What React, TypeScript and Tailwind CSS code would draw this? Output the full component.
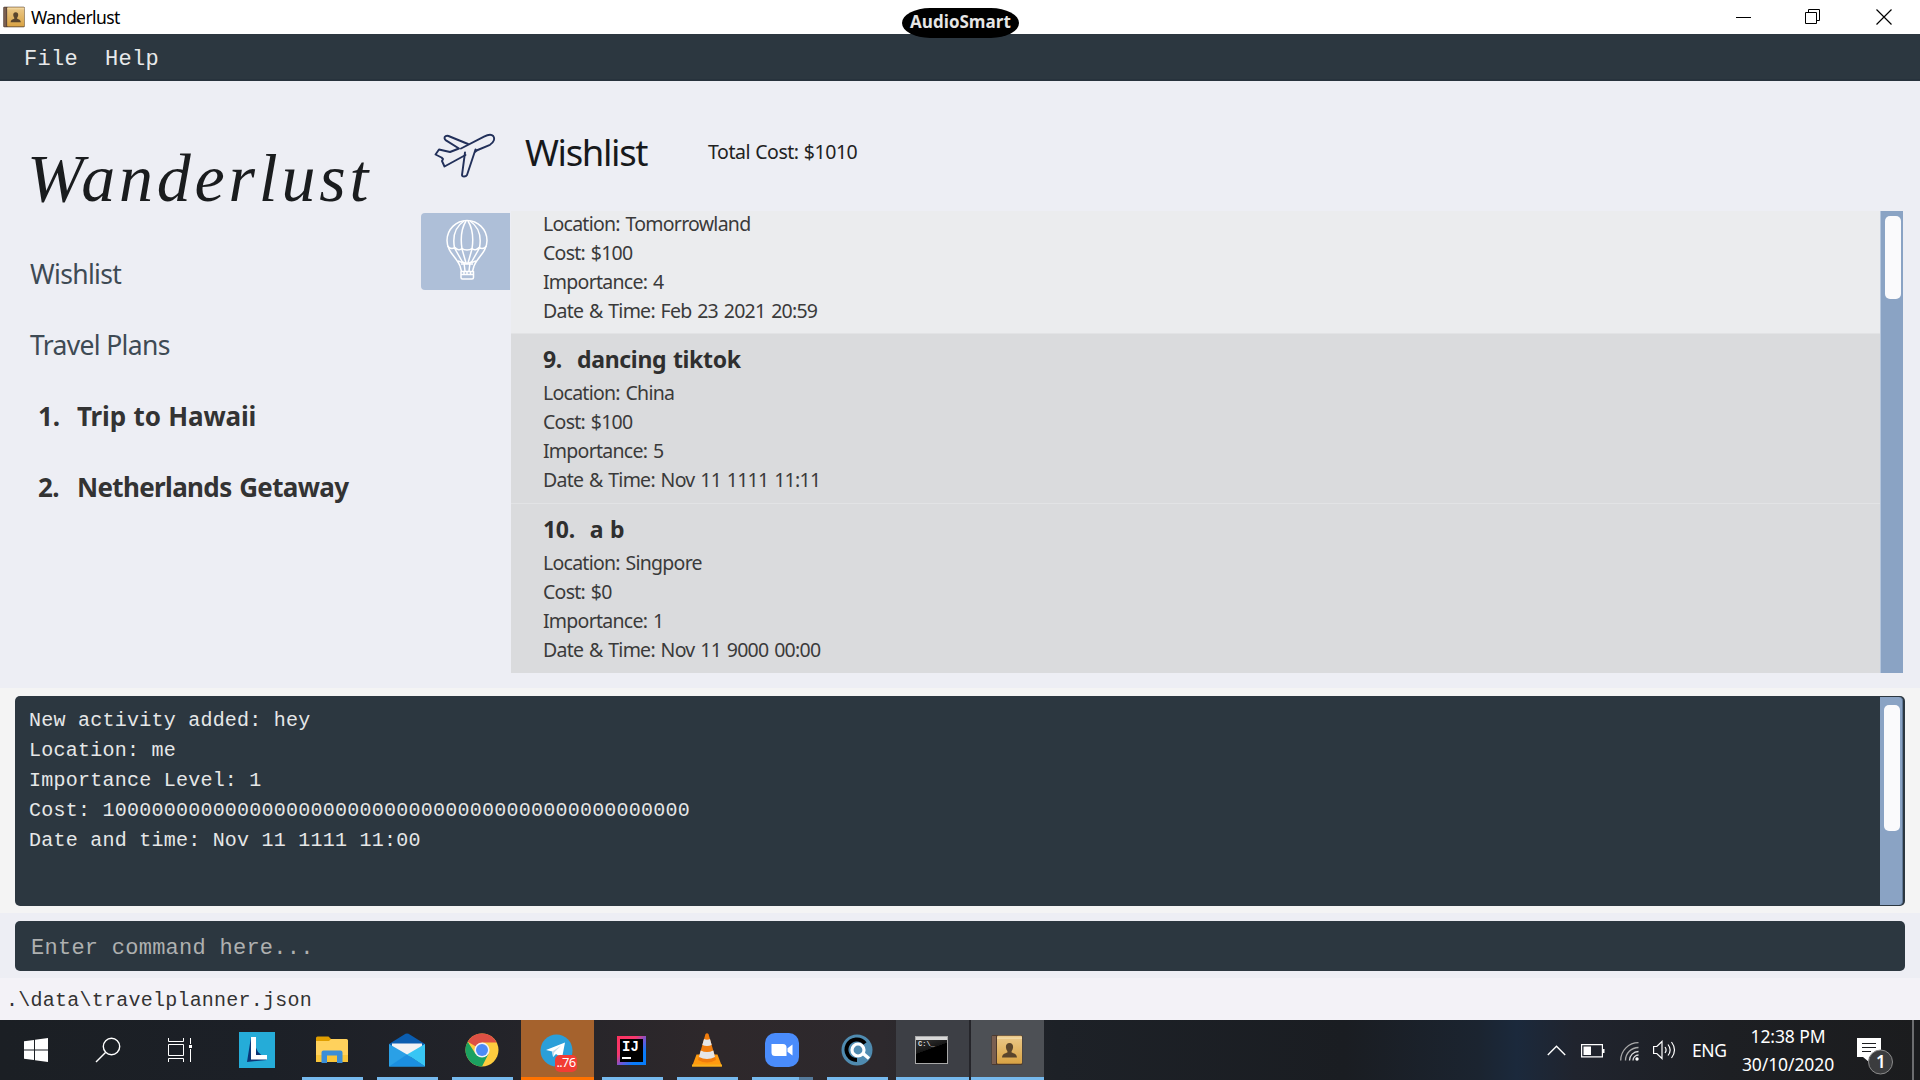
import React from "react";

type Activity = { index: string; name: string; rows: string[] };

const activities: Activity[] = [
  {
    index: "9.",
    name: "dancing tiktok",
    rows: ["Location: China", "Cost: $100", "Importance: 5", "Date & Time: Nov 11 1111 11:11"],
  },
  {
    index: "10.",
    name: "a b",
    rows: ["Location: Singpore", "Cost: $0", "Importance: 1", "Date & Time: Nov 11 9000 00:00"],
  },
];

const messages = [
  "New activity added: hey",
  "Location: me",
  "Importance Level: 1",
  "Cost: 100000000000000000000000000000000000000000000000",
  "Date and time: Nov 11 1111 11:00",
];

function BookIcon({ className }: { className: string }) {
  return (
    <svg viewBox="0 0 32 32" className={className}>
      <defs>
        <linearGradient id="cover" x1="0" y1="0" x2="0" y2="1">
          <stop offset="0" stopColor="#ebc98a" />
          <stop offset="1" stopColor="#d9a343" />
        </linearGradient>
      </defs>
      <rect x="0.5" y="1" width="31" height="30" rx="1.5" fill="#4c3a2e" />
      <rect x="1" y="2" width="4" height="28" fill="#7a5f50" />
      <rect x="6" y="1.8" width="25" height="28" rx="1" fill="url(#cover)" />
      <rect x="6" y="3.6" width="25" height="1" fill="#f8e3b5" />
      <path
        d="M18.5 9c2.400 0 3.800 1.700 3.600 4.200-.2 2-1 3.200-1.500 3.900v1.500c2.400 1 5 1.300 5.400 4.900H11c.4-3.600 3-3.900 5.400-4.900v-1.500c-.5-.7-1.300-1.900-1.500-3.900C14.700 10.700 16.100 9 18.500 9z"
        fill="#5a452c"
      />
    </svg>
  );
}

function TitleBar() {
  return (
    <div className="flex h-[34px] shrink-0 items-center bg-white pl-[3px]">
      <BookIcon className="size-[22px]" />
      <span className="ml-[6px] text-[17.500px] tracking-[-0.032em] text-black">Wanderlust</span>
      <div className="ml-auto flex items-center">
        <svg width="15" height="15" viewBox="0 0 15 15" className="mr-[54px]">
          <path d="M0 7.500h15" stroke="#000" />
        </svg>
        <svg width="16" height="16" viewBox="0 0 16 16" className="mr-[55px]" fill="none" stroke="#000">
          <path d="M.5 3.500h11v11H.5zM3.500 3.500v-3h11v11h-3" />
        </svg>
        <svg width="16" height="16" viewBox="0 0 16 16" className="mr-[28px]">
          <path d="M.5 .5l15 15M15.500 .5l-15 15" stroke="#000" strokeWidth="1.200" />
        </svg>
      </div>
    </div>
  );
}

function PlaneIcon() {
  return (
    <svg width="62" height="46" viewBox="0 0 62 46" fill="none" stroke="#22305a" strokeWidth="1.900" strokeLinejoin="round" strokeLinecap="round">
      <path d="M27 15.500 50 3.600c3.500-1.800 7.500-2.400 9.200-.6 2 2.500.6 6.600-3.200 8.800L42.500 17.500" />
      <path d="M34 11 14.500 3c-2-.6-4.200.3-4 2.200.1 1 .6 1.500 1.500 2.200L25 15.500 16 19 5 16.500 1.500 21.500 7.500 24.500 9 26l-1 2 2.500 5.500 21-11.500" />
      <path d="M31 19.500 28 42c0 2 3.800 2 5 0l8.500-25.500M41 19l1.500-1.500" />
    </svg>
  );
}

function BalloonIcon() {
  return (
    <svg width="44" height="62" viewBox="0 0 44 62" fill="none" stroke="#fff" strokeWidth="1.500" strokeLinejoin="round">
      <path d="M15 47C11.500 38 2 33 2 21.500a20 20 0 0 1 40 0C42 33 32.500 38 29 47" />
      <path d="M19 2C10 8 7.500 18 9.500 29L18 44M25 2c9 6 11.500 16 9.500 27L26 44M21 2c-5 8-5.500 18-4 28l4 14M23 2c5 8 5.500 18 4 28l-4 14" />
      <path d="M2.500 27c2 2.500 5 3 7.500 1.500 2 2.500 5 3 7 1 2.500 2 7.500 2 10 0 2 2 5 1.500 7-1 2.500 1.500 5.500 1 7.500-1.500M13 42c2 .5 3 2 5 1 2 1.500 6 1.500 8 0 2 1 3-.5 5-1" />
      <path d="M15 47l1.500 5.500M29 47l-1.500 5.500M19 44l1 8M25 44l-1 8M16 45h12M16 52.500h12.500v6q0 1.500-1.500 1.500h-9.500q-1.500 0-1.500-1.500zM16 55.500h12.500M19 52.500v3M22 52.500v3M25.500 52.500v3" />
    </svg>
  );
}

function Sidebar() {
  return (
    <aside className="w-[421px] shrink-0 text-[26.500px] tracking-[-0.025em]">
      <div className="mt-[50px] ml-[27px] h-[108px] whitespace-nowrap font-['Liberation_Serif'] text-[68px] leading-[94px] tracking-[3.800px] text-[#1a1c1e] italic">
        Wanderlust
      </div>
      <div className="ml-[30px] flex h-[71px] items-center text-[#3e4a54]">Wishlist</div>
      <div className="ml-[30px] flex h-[71px] items-center text-[#3e4a54]">Travel Plans</div>
      <ol className="ml-[38px] text-[26px] font-bold text-[#333]">
        <li className="flex h-[71px] items-center tracking-[-0.006em] [word-spacing:1px]">
          <span className="w-[39px]">1.</span>Trip to Hawaii
        </li>
        <li className="flex h-[71px] items-center tracking-[-0.025em] [word-spacing:1.500px]">
          <span className="w-[39px]">2.</span>Netherlands Getaway
        </li>
      </ol>
    </aside>
  );
}

function Rows({ rows }: { rows: string[] }) {
  return (
    <>
      {rows.map((row) => (
        <p
          key={row}
          className="h-[29px] text-[19.500px] leading-[29px] tracking-[-0.038em] whitespace-nowrap text-[#3a3a3a] [word-spacing:1.400px]"
        >
          {row}
        </p>
      ))}
    </>
  );
}

function Wishlist() {
  return (
    <main className="flex min-w-0 grow flex-col">
      <header className="mt-[40px] flex h-[63px] items-center">
        <div className="ml-[13px] pt-[7px]">
          <PlaneIcon />
        </div>
        <h1 className="ml-[29px] w-[183px] text-[36.500px] leading-none tracking-[-0.037em] text-[#17191b]">Wishlist</h1>
        <span className="-mt-[2px] text-[19.500px] tracking-[-0.023em] text-[#222] [word-spacing:0.500px]">Total Cost: $1010</span>
      </header>
      <div className="mt-[27px] flex h-[462px]">
        <div className="mt-[2px] flex h-[77px] w-[89px] shrink-0 justify-center rounded-l-[4px] bg-[#aebfd8] pt-[6px] pl-[2px]">
          <BalloonIcon />
        </div>
        <div className="ml-[1px] flex h-[462px] w-[1369px] flex-col overflow-hidden bg-[#dadbdd]">
          <div className="h-[122px] shrink-0 overflow-hidden bg-[#ebecee] pl-[32px]">
            <div className="-mt-[2px]">
              <Rows rows={["Location: Tomorrowland", "Cost: $100", "Importance: 4", "Date & Time: Feb 23 2021 20:59"]} />
            </div>
          </div>
          {activities.map((a) => (
            <section key={a.index} className="h-[170px] shrink-0 border-t border-[#e2e3e5] pl-[32px]">
              <h2 className="flex h-[44px] items-center gap-[15px] pt-[7px] text-[23px] font-bold tracking-[-0.014em] text-[#2f2f2f] [word-spacing:1px]">
                <span>{a.index}</span>
                <span>{a.name}</span>
              </h2>
              <Rows rows={a.rows} />
            </section>
          ))}
        </div>
        <div className="h-[462px] w-[23px] border-l border-[#b5c6dd] bg-[#8aa3c4] pt-[5px] pl-[4px]">
          <div className="h-[83px] w-[16px] rounded-[5px] bg-[#fafafc]" />
        </div>
      </div>
    </main>
  );
}

function Cell({ children, cell = "", line = "bg-[#76b9ed]" }: { children: React.ReactNode; cell?: string; line?: string }) {
  return (
    <div className="flex h-[60px] w-[75px] justify-center">
      <div className={`flex h-[60px] w-[73px] flex-col items-center ${cell}`}>
        <div className="flex h-[57px] items-center pt-[3px] pr-[2px]">{children}</div>
        <div className={`h-[3px] ${cell ? "w-full" : "w-[61px]"} ${line}`} />
      </div>
    </div>
  );
}

function Taskbar() {
  return (
    <div className="flex h-[60px] shrink-0 items-center bg-[linear-gradient(90deg,#1b1f24_0%,#1c2027_14%,#222329_25%,#2e282b_37%,#2d292d_46%,#1d2127_55%,#1a1d22_70%,#1b2430_77%,#1b293c_79%,#20242e_82%,#1d1f23_90%,#1b1c1e_100%)]">
      <div className="flex w-[72px] justify-center">
        <svg width="24" height="24" viewBox="0 0 24 24" fill="#fff">
          <path d="M0 3.300 10 2v9.500H0zM11 1.800 24 0v11.500H11zM0 12.500h10V22L0 20.700zM11 12.500h13V24l-13-1.800z" />
        </svg>
      </div>
      <div className="flex w-[72px] justify-center">
        <svg width="26" height="26" viewBox="0 0 26 26" fill="none" stroke="#fff" strokeWidth="1.400">
          <circle cx="16.500" cy="9.500" r="8.200" />
          <path d="M10.500 15.500 1 25" />
        </svg>
      </div>
      <div className="flex w-[76px] justify-center pr-[4px]">
        <svg width="25" height="24" viewBox="0 0 25 24" fill="none" stroke="#fff">
          <path d="M.5 0v3.500h15V0M.5 6.500h15v11H.5zM.5 24v-3.500h15V24M22.500 0v6M22.500 11v13" />
          <path d="M21 7h3v3h-3z" fill="#fff" stroke="none" />
        </svg>
      </div>
      <div className="flex w-[75px] justify-center pr-[2px]">
        <svg width="36" height="36" viewBox="0 0 36 36">
          <path d="M0 0h36v36H0z" fill="#25acd8" />
          <path d="M12 5 8 30l20-2-9-8z" fill="#0b3575" />
          <path d="M12 5h5v18h11v4.500H12z" fill="#fff" />
        </svg>
      </div>
      <Cell>
        <svg width="32" height="28" viewBox="0 0 32 28">
          <path d="M0 2q0-1.500 1.500-1.500h11L15 3v3H0z" fill="#e09e00" />
          <path d="M0 5h13l2-2h15.500Q32 3 32 4.500V26H0z" fill="#ffd15c" />
          <path d="M0 19h32v7H0z" fill="#f9c539" />
          <path d="M5.500 16.500q0-2 2-2h17q2 0 2 2v10.500h-5.500v-7.500h-10V27H5.500z" fill="#3a8ed8" />
        </svg>
      </Cell>
      <Cell>
        <svg width="36" height="34" viewBox="0 0 36 34">
          <path d="M0 11 16.500.8q1.500-.8 3 0L36 11v6H0z" fill="#0a5db0" />
          <path d="M3 10.500h30v8L18 25 3 18z" fill="#f1f2f4" />
          <path d="M0 11 18 21.500 36 33.500H0z" fill="#2aa0e6" />
          <path d="M36 11v22.500L18 21.500z" fill="#38c6f4" />
          <path d="M0 33.500 18 21.500l18 12z" fill="#1b8fe0" />
        </svg>
      </Cell>
      <Cell>
        <svg width="34" height="34" viewBox="0 0 34 34">
          <circle cx="17" cy="17" r="16.500" fill="#fdcc3e" />
          <path d="M17 17 2.700 8.750A16.500 16.500 0 0 1 31.300 8.750L31.300 9.500H17z" fill="#dd5044" />
          <path d="M2.700 8.750A16.500 16.500 0 0 0 17 33.500L23.500 20.700 17 17 10.500 20.700z" fill="#1ba160" />
          <circle cx="17" cy="17" r="7.600" fill="#f3f3f3" />
          <circle cx="17" cy="17" r="6" fill="#4c8bf5" />
        </svg>
      </Cell>
      <Cell cell="bg-[#a5622d]" line="bg-[#ff7200]">
        <div className="relative">
          <svg width="33" height="33" viewBox="0 0 33 33">
            <circle cx="16.500" cy="16.500" r="16" fill="#2b9fd9" />
            <path d="M6 16 25 8.500 22 24l-6-4-3 3-.8-5.500z" fill="#fff" />
            <path d="m12.200 17.500 9-6-7 7-1 4.500z" fill="#c5dcea" />
          </svg>
          <span className="absolute top-[21px] left-[15px] flex h-[17px] w-[22px] items-center justify-center rounded-[5px] bg-[#f23c34] text-[13px] tracking-[-0.05em] text-white">
            ..76
          </span>
        </div>
      </Cell>
      <Cell>
        <div className="flex size-[29px] items-center justify-center bg-[linear-gradient(135deg,#fe315d_0%,#f5396f_35%,#6b57d8_55%,#087cfa_75%)]">
          <div className="flex size-[23px] flex-col bg-black pt-[2px] pl-[2px] font-['Liberation_Mono'] text-[14px] leading-[12px] font-bold text-white">
            IJ
            <span className="mt-[4px] h-[2px] w-[9px] bg-white" />
          </div>
        </div>
      </Cell>
      <Cell>
        <svg width="30" height="34" viewBox="0 0 30 34">
          <path d="M4.500 21.500h21L30 33.500H0z" fill="#ff9a0f" />
          <path d="M0 31.500h30v2H0z" fill="#f7b01e" />
          <path d="M13.500 1q1.500-1.500 3 0L24 27q-9 5-18 0z" fill="#f07c0c" />
          <path d="m12 6-1.700 6q4.700 2 9.400 0L18 6q-3 1.300-6 0zM8.700 17.500 7 24q8 4 16 0l-1.700-6.500q-6.300 3-12.600 0z" fill="#e6e6e6" />
        </svg>
      </Cell>
      <Cell line="bg-[linear-gradient(90deg,#76b9ed_47px,#557a9b_47px)]">
        <svg width="34" height="34" viewBox="0 0 34 34">
          <rect width="34" height="34" rx="10" fill="#4a8cfb" />
          <path d="M6.500 11h11.500q3.500 0 3.500 3.500V23H10q-3.500 0-3.500-3.500zM22.500 15.200l5-3.700v11l-5-3.700z" fill="#fff" />
        </svg>
      </Cell>
      <Cell>
        <svg width="32" height="32" viewBox="0 0 32 32">
          <circle cx="16" cy="16" r="15.500" fill="#4f8bb0" />
          <path d="M24 9.500A10.300 10.300 0 1 0 16 26" fill="none" stroke="#000" strokeWidth="4" />
          <circle cx="17" cy="16" r="6" fill="none" stroke="#fff" strokeWidth="3.200" />
          <path d="m21.500 19 6.500 5.500" stroke="#fff" strokeWidth="3.500" />
        </svg>
      </Cell>
      <Cell cell="bg-[#3d3f45]">
        <div className="h-[28px] w-[33px] border border-[#a9a9a9] bg-[linear-gradient(160deg,#3c3c3c_0%,#161616_45%,#000_46%)]">
          <div className="h-[3px] bg-[#d8d8d8]" />
          <div className="pl-[2px] font-['Liberation_Mono'] text-[7px] leading-[9px] font-bold text-[#ddd]">C:\_</div>
        </div>
      </Cell>
      <Cell cell="bg-[#4d5055]">
        <BookIcon className="size-[32px]" />
      </Cell>

      <div className="ml-auto flex h-[60px] items-center text-white">
        <svg width="19" height="11" viewBox="0 0 19 11" fill="none" stroke="#fff" strokeWidth="1.400" className="mr-[15px]">
          <path d="m.8 10 8.700-8.700L18.200 10" />
        </svg>
        <svg width="24" height="14" viewBox="0 0 24 14" className="mt-[1px] mr-[15px]">
          <path d="M.6 .6h20.800v12.300H.6z" fill="none" stroke="#fff" strokeWidth="1.200" />
          <path d="M2.500 2.500h7.500v8.500H2.500zM22 5h1.500v4H22z" fill="#fff" />
        </svg>
        <svg width="19" height="19" viewBox="0 0 19 19" fill="none" strokeWidth="1.300" className="mt-[2px] mr-[14px]">
          <path d="M.7 18.500A17.800 17.800 0 0 1 18.500.7M5.500 18.500a13 13 0 0 1 13-13" stroke="#aaa" />
          <path d="M9.500 18.500a9 9 0 0 1 9-9M13 18.500a5.500 5.500 0 0 1 5.500-5.500" stroke="#fff" opacity="0.850" />
          <circle cx="17" cy="17" r="1.700" fill="#fff" />
        </svg>
        <svg width="23" height="20" viewBox="0 0 23 20" fill="none" stroke="#fff" strokeWidth="1.200" className="mr-[16px]">
          <path d="M.6 6.500h3.200L9 1.500v17l-5.200-5H.6zM12 7q2.200 3 0 6M15 4.500q4.300 5.500 0 11M18.500 2q6 8 0 16" />
        </svg>
        <span className="w-[44px] text-[17.500px] tracking-[-0.024em]">ENG</span>
        <div className="w-[104px] text-center text-[17.500px] leading-[28px] tracking-[-0.005em] whitespace-nowrap">
          <div>12:38 PM</div>
          <div>30/10/2020</div>
        </div>
        <div className="relative ml-[17px] h-[24px] w-[55px]">
          <svg width="38" height="38" viewBox="0 0 38 38">
            <path d="M0 0h24v19H12v5l-6-5H0z" fill="#fff" />
            <path d="M5 5.500h14M5 9.500h14M5 13.500h9" stroke="#1c1d20" strokeWidth="1.200" />
            <circle cx="23.500" cy="24" r="12" fill="#3b3c3e" stroke="#8b8b8b" />
          </svg>
          <span className="absolute top-[12px] left-[19px] text-[17px] leading-[24px] font-semibold">1</span>
        </div>
        <div className="mr-[6px] h-[60px] w-[2px] bg-[#6c6d6f]" />
      </div>
    </div>
  );
}

export default function App() {
  return (
    <div className="relative flex h-[1080px] w-[1920px] flex-col overflow-hidden bg-[#edeef4] font-['Noto_Sans',sans-serif]">
      <TitleBar />
      <nav className="flex h-[47px] shrink-0 items-center border-b-2 border-[#27323c] bg-[#2c3740] pl-[24px] font-['Liberation_Mono',monospace] text-[22px] tracking-[0.260px] text-[#e8e9ea]">
        <span className="w-[81px] pt-[5px]">File</span>
        <span className="pt-[5px]">Help</span>
      </nav>
      <div className="flex h-[607px] shrink-0">
        <Sidebar />
        <Wishlist />
      </div>
      <div className="h-[225px] shrink-0 bg-[#f4f4f4] px-[15px] pt-[8px]">
        <div className="flex h-[210px] justify-between overflow-hidden rounded-[5px] bg-[#2c3740] font-['Liberation_Mono',monospace] text-[20px] leading-[30px] tracking-[0.240px] text-[#e6e7e8]">
          <div className="pt-[10px] pl-[14px] whitespace-pre">
            {messages.map((m) => (
              <p key={m}>{m}</p>
            ))}
          </div>
          <div className="mt-px mr-[2px] h-[208px] w-[23px] rounded-r-[4px] border-r border-[#5f7896] bg-[#8aa3c4] pt-[8px] pl-[4px]">
            <div className="h-[126px] w-[16px] rounded-[5px] bg-[#fafafc]" />
          </div>
        </div>
      </div>
      <div className="h-[65px] shrink-0 px-[15px] pt-[8px]">
        <div className="flex h-[50px] items-center rounded-[5px] bg-[#2c3740] pt-[5px] pl-[16px] font-['Liberation_Mono',monospace] text-[22px] tracking-[0.260px] text-[#aeb0b0]">
          Enter command here...
        </div>
      </div>
      <div className="flex h-[42px] shrink-0 items-center bg-[#f3f2f7] pt-[4px] pl-[6px] font-['Liberation_Mono',monospace] text-[20px] tracking-[0.240px] text-[#333]">
        .\data\travelplanner.json
      </div>
      <Taskbar />
      <div className="absolute top-[8px] left-[902px] flex h-[30px] w-[117px] items-center justify-center rounded-[28px/15px] bg-black pb-[3px] font-['Open_Sans',sans-serif] text-[17px] leading-none font-bold text-[#e6e6e6]">
        AudioSmart
      </div>
    </div>
  );
}
